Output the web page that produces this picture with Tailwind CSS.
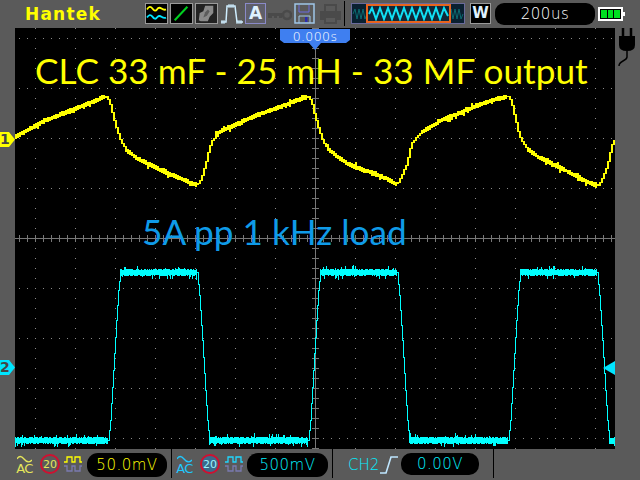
<!DOCTYPE html>
<html>
<head>
<meta charset="utf-8">
<script src="https://cdn.jsdelivr.net/npm/@tailwindcss/browser@4"></script>
</head>
<body class="m-0 bg-[#5a5a5a]">
<div class="w-[640px] h-[480px] flex flex-col overflow-hidden bg-[#5a5a5a] font-['DejaVu_Sans',sans-serif]">
  <!-- top bar -->
  <div class="h-[28px] flex items-start relative shrink-0">
    <div class="w-[145px] pl-[25px] pt-[3px] text-[#ffff00] font-bold text-[17px] leading-[22px] tracking-[1.2px]">Hantek</div>
    <div class="flex mt-[3px] gap-[2px]">
      <svg class="w-[23px] h-[21px] bg-black border border-[#9a9a9a] block" viewBox="0 0 23 21" fill="none" stroke-width="2"><path d="M1 6 Q4 1 7 5 T12 6 T17 5 T22 6" stroke="#ffff00"/><path d="M1 15 Q4 10 7 14 T12 15 T17 14 T22 15" stroke="#00e5ff"/></svg>
      <svg class="w-[23px] h-[21px] bg-black border border-[#9a9a9a] block" viewBox="0 0 23 21" fill="none"><path d="M4 18 L18 3" stroke="#00d020" stroke-width="2.2"/></svg>
      <svg class="w-[23px] h-[21px] bg-[#222] border border-[#9a9a9a] block" viewBox="0 0 23 21"><path d="M3 18 L4 10 L8 8 L10 2 L19 2 L19 10 L15 14 L13 19 L5 19 Z" fill="#8a8a8a"/><path d="M8 15 L10 9 L13 6 L15 8 L12 13 Z" fill="#5c5c5c"/></svg>
    </div>
    <svg class="w-[22px] h-[22px] ml-[3px] mt-[3px] block" viewBox="0 0 22 22" fill="none"><path d="M0 19 H5 L6 3 H14 L16 19 H22" stroke="#cfeeff" stroke-width="1.5"/><path d="M1 21 V17 M3 21 V17 M16 21 V17 M18 21 V17 M20 21 V17 M8 5 V1 M10 5 V1 M12 5 V1" stroke="#cfeeff"/></svg>
    <div class="w-[21px] h-[21px] ml-[2px] mt-[3px] border border-[#8a8ac8] bg-[#5f5f6a] flex items-center justify-center text-[#dff2ff] font-bold text-[17px] leading-none">A</div>
    <svg class="w-[24px] h-[12px] ml-[2px] mt-[9px] block" viewBox="0 0 24 12"><path d="M0 4 H14 V9 H11 V7 H9 V9 H6 V7 H4 V9 H0 Z" fill="#4a4a4a"/><circle cx="19" cy="6" r="4" fill="none" stroke="#4a4a4a" stroke-width="2.5"/></svg>
    <svg class="w-[21px] h-[21px] ml-[2px] mt-[3px] block" viewBox="0 0 21 21" fill="none"><path d="M1 1 H20 V20 H1 Z" stroke="#9fc6e8" stroke-width="1.5"/><path d="M5 2 V9 H15 V2" stroke="#6a6ae0"/><path d="M5 20 V13 H16 V20" stroke="#9fc6e8"/><rect x="11" y="14" width="2.5" height="5" fill="#2a2ab0"/></svg>
    <svg class="w-[21px] h-[21px] ml-[5px] mt-[3px] block" viewBox="0 0 21 21" fill="none" stroke="#4a4a4a" stroke-width="2"><path d="M5 8 V2 H16 V8"/><path d="M1 9 H20 V16 H1 Z" fill="#4a4a4a"/><path d="M5 14 H16 V20 H5 Z" fill="#5a5a5a"/></svg>
    <div class="w-px h-[25px] bg-black ml-[3px] mt-[1px]"></div>
    <div class="relative w-[114px] h-[21px] ml-[6px] mt-[3px] bg-[#0a2030] border border-[#6a6a9a]">
      <svg class="absolute left-0 top-0 w-[112px] h-[19px]" viewBox="0 0 112 19" fill="none"><path d="M1 10 l2 -5 l2 10 l2 -10 l2 10 l2 -10 l2 10 l2 -5" stroke="#0a6a70"/><path d="M97 10 l2 -5 l2 10 l2 -10 l2 10 l2 -10 l2 10 l2 -5" stroke="#0a6a70"/></svg>
      <svg class="absolute left-[14px] top-0 w-[85px] h-[19px] bg-[#102838] border-2 border-[#e8641e] block" viewBox="0 0 81 15" fill="none"><path d="M1 8 L4 2 L8 13 L12 2 L16 13 L20 2 L24 13 L28 2 L32 13 L36 2 L40 13 L44 2 L48 13 L52 2 L56 13 L60 2 L64 13 L68 2 L72 13 L76 2 L80 10" stroke="#10e0f5" stroke-width="2"/></svg>
    </div>
    <div class="w-[21px] h-[21px] ml-[5px] mt-[3px] bg-black border border-[#9a9a9a] flex items-center justify-center text-[#dff2ff] font-bold text-[15px] leading-none">W</div>
    <div class="w-[100px] h-[22px] ml-[4px] mt-[3px] rounded-[9px] bg-black flex items-center justify-center text-white text-[15px] leading-none font-extralight tracking-[0.5px]">200us</div>
    <div class="w-[27px] h-[14px] ml-[3px] mt-[7px] flex items-center">
      <div class="w-[25px] h-[14px] border-2 border-white bg-black flex gap-[1px] items-center px-[1px]">
        <div class="w-[6px] h-[8px] bg-[#00e020]"></div><div class="w-[6px] h-[8px] bg-[#00e020]"></div><div class="w-[6px] h-[8px] bg-[#00e020]"></div>
      </div>
      <div class="w-[2px] h-[4px] bg-white"></div>
    </div>
  </div>

  <!-- middle -->
  <div class="flex h-[421px] shrink-0">
    <div class="w-[15px] relative shrink-0">
      <svg class="absolute left-0 top-[104px] w-[15px] h-[15px] block" viewBox="0 0 15 15"><path d="M0 0 H9 L15 7.5 L9 15 H0 Z" fill="#ffff00"/></svg>
      <span class="absolute left-[0px] top-[104px] w-[9px] text-center text-[#444] font-bold text-[14px] leading-[15px]">1</span>
      <svg class="absolute left-0 top-[332px] w-[15px] h-[15px] block" viewBox="0 0 15 15"><path d="M0 0 H9 L15 7.5 L9 15 H0 Z" fill="#00e5ff"/></svg>
      <span class="absolute left-[0px] top-[332px] w-[9px] text-center text-[#444] font-bold text-[14px] leading-[15px]">2</span>
    </div>
    <div class="w-[600px] h-[421px] relative bg-black shrink-0">
      <svg class="absolute inset-0 w-[600px] h-[421px] block" viewBox="15 28 600 421" shape-rendering="crispEdges">
        <defs>
          <pattern id="cols" x="35" y="38" width="40" height="10" patternUnits="userSpaceOnUse"><rect width="1" height="1" fill="#8a8a8a"/></pattern>
          <pattern id="rows" x="19" y="38" width="8" height="50" patternUnits="userSpaceOnUse"><rect width="1" height="1" fill="#8a8a8a"/></pattern>
          <pattern id="vt" x="312" y="38" width="7" height="10" patternUnits="userSpaceOnUse"><rect width="7" height="1" fill="#777"/></pattern>
          <pattern id="ht" x="19" y="235" width="8" height="7" patternUnits="userSpaceOnUse"><rect width="1" height="7" fill="#777"/></pattern>
        </defs>
        <rect x="15" y="28" width="600" height="421" fill="url(#cols)"/>
        <rect x="15" y="28" width="600" height="421" fill="url(#rows)"/>
        <rect x="312" y="28" width="7" height="421" fill="url(#vt)"/>
        <rect x="15" y="235" width="600" height="7" fill="url(#ht)"/>
        <rect x="315" y="28" width="1" height="421" fill="#777"/>
        <rect x="15" y="238" width="600" height="1" fill="#777"/>
        <path id="ch2" fill="none" stroke="#00ffff" stroke-width="1"/>
        <path id="ch1" fill="none" stroke="#ffff00" stroke-width="2"/>
      </svg>
      <div class="absolute left-[20px] top-[20px] text-[#ffff00] text-[35.2px] leading-[44px] whitespace-nowrap font-['Lato',sans-serif]">CLC 33 mF - 25 mH - 33 MF output</div>
      <div class="absolute left-[127px] top-[181px] text-[#0f9be8] text-[35.2px] leading-[44px] whitespace-nowrap font-['Lato',sans-serif]">5A pp 1 kHz load</div>
      <svg class="absolute left-[265px] top-0 w-[70px] h-[22px] block" viewBox="0 0 70 22"><path d="M0 1 H70 V12 L66 15 H41 L35 22 L29 15 H4 L0 12 Z" fill="#3f7ff0"/></svg>
      <div class="absolute left-[265px] top-0 w-[70px] h-[16px] text-center text-white text-[12.5px] leading-[17px] font-extralight tracking-[0.4px]">0.000s</div>
      <svg class="absolute left-[588px] top-[333px] w-[12px] h-[14px] block" viewBox="0 0 12 14"><path d="M0 7 L12 0 V14 Z" fill="#00e5ff"/></svg>
    </div>
    <div class="w-[25px] shrink-0">
      <svg class="w-[20px] h-[44px] ml-[3px] block" viewBox="0 0 20 44" fill="none"><path d="M5 0 V8 M13 0 V8" stroke="#000" stroke-width="2.5"/><path d="M1 8 H17 V17 Q17 23 9 23 Q1 23 1 17 Z" fill="#000"/><path d="M9 23 V29 Q9 31 5 33 Q1 35 1 38" stroke="#000" stroke-width="1.5"/></svg>
    </div>
  </div>

  <!-- bottom -->
  <div class="flex-1 flex items-start relative">
    <div class="flex flex-col items-center w-[17px] ml-[16px] mt-[6px] text-[#e6e65a]">
      <svg class="w-[15px] h-[8px] block" viewBox="0 0 15 8" fill="none"><path d="M0 4 Q3 -1 7 4 T15 5" stroke="#e6e65a" stroke-width="1.3"/></svg>
      <span class="text-[13px] leading-[12px] tracking-[-0.5px]">AC</span>
    </div>
    <div class="w-[20px] h-[20px] ml-[7px] mt-[5px] rounded-full border-2 border-[#d01030] flex items-center justify-center text-[#e6e65a] text-[11px] leading-none">20</div>
    <svg class="w-[18px] h-[18px] ml-[4px] mt-[6px] block" viewBox="0 0 18 18" fill="none"><path d="M0 7 H3 V2 H8 V7 H11 V2 H16 V7 H18" stroke="#ffff00" stroke-width="1.3"/><path d="M0 11 H3 V16 H8 V11 H11 V16 H16 V11 H18" stroke="#7a7ab0" stroke-width="1.3"/></svg>
    <div class="w-[80px] h-[24px] ml-[5px] mt-[4px] rounded-[11px] bg-black flex items-center justify-center text-[#ffff00] text-[15px] leading-none font-extralight tracking-[0.5px]">50.0mV</div>
    <div class="w-px h-[29px] bg-black ml-[4px]"></div>
    <div class="flex flex-col items-center w-[17px] ml-[4px] mt-[6px] text-[#20c8ff]">
      <svg class="w-[15px] h-[8px] block" viewBox="0 0 15 8" fill="none"><path d="M0 4 Q3 -1 7 4 T15 5" stroke="#20c8ff" stroke-width="1.3"/></svg>
      <span class="text-[13px] leading-[12px] tracking-[-0.5px]">AC</span>
    </div>
    <div class="w-[20px] h-[20px] ml-[7px] mt-[5px] rounded-full border-2 border-[#d01030] bg-[#3a6a8a] flex items-center justify-center text-[#9ff2ff] text-[11px] leading-none">20</div>
    <svg class="w-[18px] h-[18px] ml-[5px] mt-[6px] block" viewBox="0 0 18 18" fill="none"><path d="M0 7 H3 V2 H8 V7 H11 V2 H16 V7 H18" stroke="#20d8ff" stroke-width="1.3"/><path d="M0 11 H3 V16 H8 V11 H11 V16 H16 V11 H18" stroke="#7a7ab0" stroke-width="1.3"/></svg>
    <div class="w-[81px] h-[24px] ml-[4px] mt-[4px] rounded-[11px] bg-black flex items-center justify-center text-[#00f0ff] text-[15px] leading-none font-extralight tracking-[0.5px]">500mV</div>
    <div class="w-px h-[29px] bg-black ml-[4px]"></div>
    <div class="w-[30px] ml-[15px] mt-[7px] text-[#00f0ff] text-[15px] leading-[18px] font-extralight whitespace-nowrap">CH2</div>
    <svg class="w-[18px] h-[20px] ml-[2px] mt-[6px] block" viewBox="0 0 18 20" fill="none"><path d="M0 18 H6 L11 2 H18" stroke="#bfe6ff" stroke-width="1.6"/></svg>
    <div class="w-[78px] h-[22px] ml-[3px] mt-[4px] rounded-[10px] bg-black flex items-center justify-center text-[#00f0ff] text-[15px] leading-none font-extralight tracking-[0.5px]">0.00V</div>
    <div class="w-px h-[29px] bg-black ml-[14px]"></div>
  </div>
</div>
<script>
var seed = 12345;
function r(){ seed = (seed * 1103515245 + 12345) & 0x7fffffff; return seed / 0x7fffffff; }
function interp(p, x){
  for (var i = 1; i < p.length; i++) {
    if (x <= p[i][0]) {
      var a = p[i-1], b = p[i];
      return a[1] + (b[1]-a[1]) * (x-a[0]) / (b[0]-a[0]);
    }
  }
  return p[p.length-1][1];
}
var y1 = [[15,136],[40,122],[70,110],[105,96],[108,100],[112,116],[116,130],[120,142],[125,149],[135,157],[150,165],[165,172],[180,178],[190,183],[196,184],[200,178],[204,165],[208,148],[211,140],[215,135],[220,131],[250,117],[280,106],[307,96],[310,100],[314,117],[318,130],[322,142],[326,147],[335,155],[350,165],[370,172],[385,178],[396,184],[400,176],[405,165],[409,148],[411,142],[415,137],[420,132],[440,120],[470,108],[490,100],[507,96],[510,100],[514,118],[518,135],[522,143],[526,148],[535,155],[550,163],[565,170],[580,178],[590,183],[597,185],[601,178],[606,165],[610,147],[612,141],[615,137]];
var y2 = [[15,440],[108,440],[110,420],[113,370],[116,320],[118,290],[120,272],[197,272],[199,295],[202,340],[205,390],[207,420],[209,440],[308,440],[310,420],[313,370],[316,320],[318,290],[320,272],[397,272],[399,295],[402,340],[405,390],[407,420],[409,440],[508,440],[510,420],[513,370],[516,320],[518,290],[520,272],[597,272],[599,295],[602,340],[605,390],[607,420],[609,440],[615,440]];
function build(p, thick, spike, step){
  var d = "", prev = null;
  for (var x = 15; x < 615; x += step) {
    var y = interp(p, x), s = Math.abs(interp(p, x+1) - y);
    var up = 0, dn = 0;
    if (s < 1) {
      up = thick * (0.7 + r() * 0.4); dn = thick * (0.7 + r() * 0.4);
      if (r() < 0.12) up += r() * spike;
      if (r() < 0.12) dn += r() * spike;
    }
    var t = Math.round(y - up), b = Math.round(y + dn) + 1;
    if (prev !== null) { t = Math.min(t, Math.round(prev)); b = Math.max(b, Math.round(prev) + 1); }
    d += "M" + (x + (step === 2 ? 1 : 0.5)) + " " + t + "V" + b;
    prev = y;
  }
  return d;
}
document.getElementById("ch1").setAttribute("d", build(y1, 2, 3, 2));
document.getElementById("ch2").setAttribute("d", build(y2, 3, 4, 1));
</script>
</body>
</html>
